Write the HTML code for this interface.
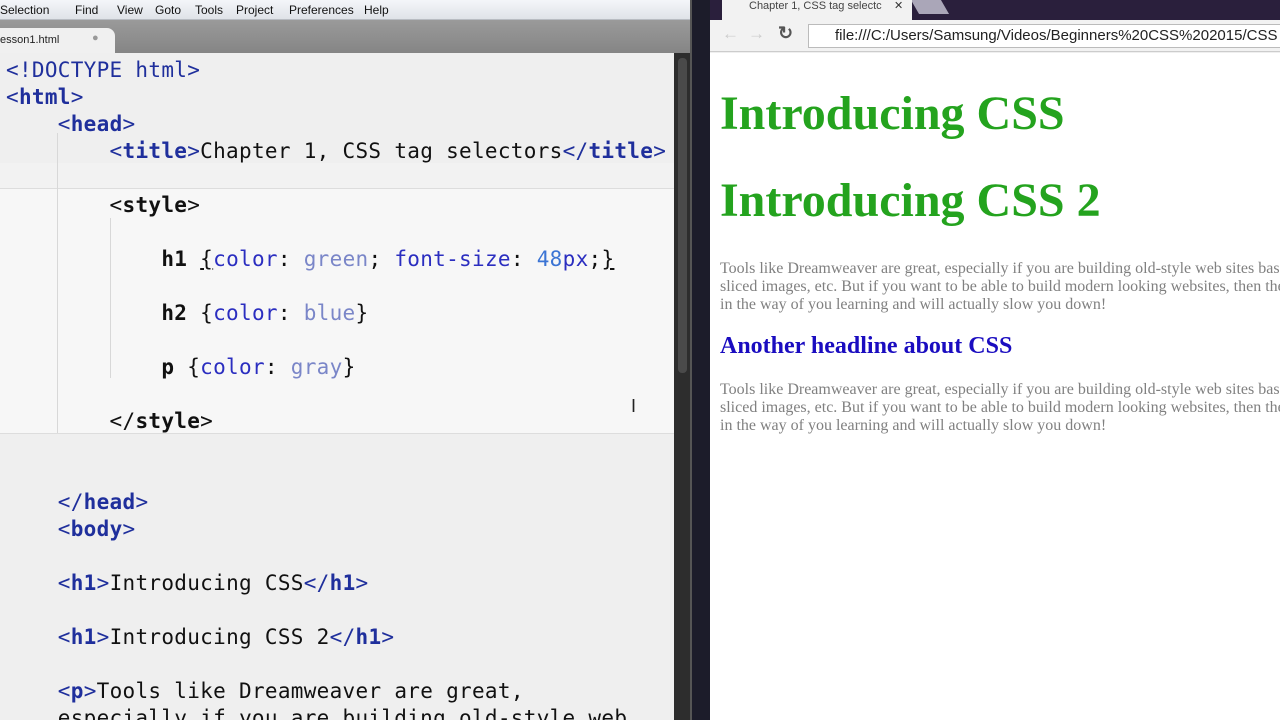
<!DOCTYPE html>
<html style="overflow:hidden"><head><style>
*{margin:0;padding:0;box-sizing:border-box}
html,body{width:1280px;height:720px;overflow:hidden}
body{position:relative;background:#efefef;font-family:"Liberation Sans",sans-serif}
.menu{position:absolute;left:0;top:0;width:690px;height:20px;background:linear-gradient(#f4f6f9,#dfe3e8);font-size:12px;color:#111;border-bottom:1px solid #b8bcc2}
.menu span{position:absolute;top:3px}
.tabbar{position:absolute;left:0;top:20px;width:690px;height:33px;background:linear-gradient(#9a9a9a,#858585)}
.tab{position:absolute;left:-20px;top:8px;width:135px;height:25px;background:#f0f0f0;border-radius:0 8px 0 0;font-size:11px;color:#222;padding:6px 0 0 20px}
.ed{position:absolute;left:0;top:53px;width:674px;height:667px;background:#efefef}
.hl{position:absolute;left:0;width:674px;background:#f7f7f7}
.code{position:absolute;left:6px;top:57px;font-family:"DejaVu Sans Mono","Liberation Mono",monospace;font-size:21px;letter-spacing:0.3px;white-space:pre;color:#111;line-height:27px}
.t{color:#1f2f9c}.p{color:#2b2ec0}.v{color:#7a86c8}.n{color:#3b74d4}
.sb{position:absolute;left:674px;top:53px;width:16px;height:667px;background:#2d2d2d}
.th{position:absolute;left:678px;top:58px;width:9px;height:315px;background:#4a4a4a;border-radius:4px}
.sep{position:absolute;left:690px;top:0;width:20px;height:720px;background:#1c1c2a;border-left:2px solid #555}
.ct{position:absolute;left:710px;top:0;width:570px;height:20px;background:#2a1f3c}
.btab{position:absolute;left:722px;top:0;width:190px;height:22px;background:#f2f2f2;font-size:11px;color:#444;padding:0 0 0 27px;line-height:12px}
.tool{position:absolute;left:710px;top:20px;width:570px;height:32px;background:#f2f2f2;border-bottom:1px solid #ccc}
.url{position:absolute;left:808px;top:24px;width:480px;height:24px;background:#fff;border:1px solid #bbb;font-size:15px;color:#222;padding:2px 0 0 26px;white-space:nowrap;overflow:hidden}
.page{position:absolute;left:710px;top:53px;width:570px;height:667px;background:#fff;font-family:"Liberation Serif",serif;overflow:hidden}
.page h1{position:absolute;left:10px;font-size:48px;color:#24a31e;font-weight:bold;white-space:nowrap}
.page p{position:absolute;left:10px;font-size:16px;line-height:18px;color:#808080;white-space:nowrap}
.page h2{position:absolute;left:10px;font-size:24px;color:#1a0cc0;font-weight:bold;white-space:nowrap}
</style></head><body>
<div class="menu"><span style="left:0">Selection</span><span style="left:75px">Find</span><span style="left:117px">View</span><span style="left:155px">Goto</span><span style="left:195px">Tools</span><span style="left:236px">Project</span><span style="left:289px">Preferences</span><span style="left:364px">Help</span></div>
<div class="tabbar"><div class="tab">esson1.html<span style="position:absolute;left:112px;top:4px;color:#999">●</span></div></div>
<div class="ed">
<div class="hl" style="top:110px;height:26px;background:#f2f2f2;border-bottom:1px solid #ddd"></div>
<div class="hl" style="top:136px;height:245px;border-bottom:1px solid #ddd"></div>
<div style="position:absolute;left:57px;top:80px;width:1px;height:300px;background:#d8d8d8"></div>
<div style="position:absolute;left:110px;top:165px;width:1px;height:160px;background:#d8d8d8"></div>
</div>
<div class="code"><span class="t">&lt;!DOCTYPE html&gt;</span>
<span class="t">&lt;<b>html</b>&gt;</span>
    <span class="t">&lt;<b>head</b>&gt;</span>
        <span class="t">&lt;<b>title</b>&gt;</span>Chapter 1, CSS tag selectors<span class="t">&lt;/<b>title</b>&gt;</span>

        &lt;<b>style</b>&gt;

            <b>h1</b> <u>{</u><span class="p">color</span>: <span class="v">green</span>; <span class="p">font-size</span>: <span class="n">48</span><span class="p">px</span>;<u>}</u>

            <b>h2</b> {<span class="p">color</span>: <span class="v">blue</span>}

            <b>p</b> {<span class="p">color</span>: <span class="v">gray</span>}

        &lt;/<b>style</b>&gt;


    <span class="t">&lt;/<b>head</b>&gt;</span>
    <span class="t">&lt;<b>body</b>&gt;</span>

    <span class="t">&lt;<b>h1</b>&gt;</span>Introducing CSS<span class="t">&lt;/<b>h1</b>&gt;</span>

    <span class="t">&lt;<b>h1</b>&gt;</span>Introducing CSS 2<span class="t">&lt;/<b>h1</b>&gt;</span>

    <span class="t">&lt;<b>p</b>&gt;</span>Tools like Dreamweaver are great,
    especially if you are building old-style web</div>
<div style="position:absolute;left:631px;top:396px;font-size:18px;color:#222">I</div>
<div class="sb"></div><div class="th"></div>
<div class="sep"></div>
<div class="ct"><div style="position:absolute;left:205px;top:0;width:30px;height:14px;background:#aaa6b8;transform:skewX(30deg)"></div></div>
<div class="btab">Chapter 1, CSS tag selectc <span style="position:absolute;left:172px;top:0;color:#333">✕</span></div>
<div class="tool"><span style="position:absolute;left:12px;top:4px;font-size:17px;color:#ccc">←</span><span style="position:absolute;left:38px;top:4px;font-size:17px;color:#ccc">→</span><span style="position:absolute;left:68px;top:3px;font-size:18px;color:#555;font-weight:bold">↻</span></div>
<div class="url">file:///C:/Users/Samsung/Videos/Beginners%20CSS%202015/CSS</div>
<div class="page">
<h1 style="top:33px">Introducing CSS</h1>
<h1 style="top:120px">Introducing CSS 2</h1>
<p style="top:207px">Tools like Dreamweaver are great, especially if you are building old-style web sites based on<br>sliced images, etc. But if you want to be able to build modern looking websites, then they get<br>in the way of you learning and will actually slow you down!</p>
<h2 style="top:280px">Another headline about CSS</h2>
<p style="top:328px">Tools like Dreamweaver are great, especially if you are building old-style web sites based on<br>sliced images, etc. But if you want to be able to build modern looking websites, then they get<br>in the way of you learning and will actually slow you down!</p>
</div>
</body></html>
